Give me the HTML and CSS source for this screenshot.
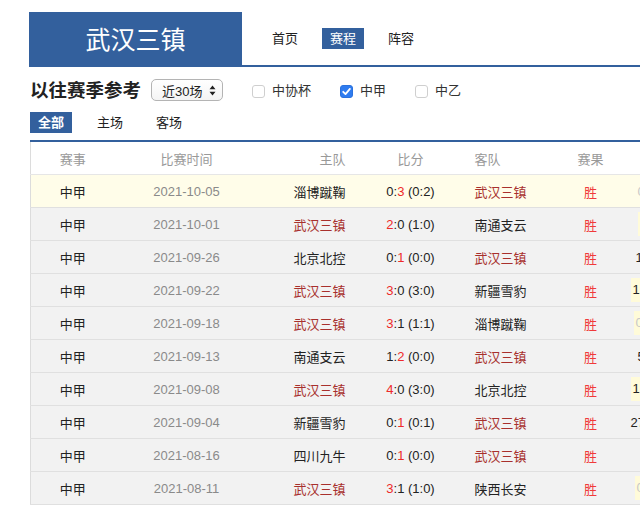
FILE: index.html
```html
<!DOCTYPE html>
<html lang="zh-CN">
<head>
    <meta charset="UTF-8">
    <meta name="viewport" content="width=device-width, initial-scale=1.0">
    <title>武汉三镇 - 赛程</title>
    <link rel="stylesheet" href="styles.css">
</head>
<body>
<div class="page">

    <div class="top-bar">
        <div class="team-title">武汉三镇</div>
        <ul class="nav">
            <li>首页</li>
            <li class="active">赛程</li>
            <li>阵容</li>
        </ul>
    </div>

    <div class="filter-row">
        <h2 class="section-title">以往赛季参考</h2>
        <div class="fake-select">
            <span>近30场</span>
            <svg width="7" height="11" viewBox="0 0 7 11"><path d="M3.5 0.5 L6.5 4.2 L0.5 4.2 Z M3.5 10.5 L6.5 6.8 L0.5 6.8 Z" fill="#222"/></svg>
        </div>
        <label class="check"><span class="box"></span>中协杯</label>
        <label class="check"><span class="box checked"><svg width="11" height="11" viewBox="0 0 11 11"><path d="M2.2 5.8 L4.5 8.1 L8.9 2.9" fill="none" stroke="#fff" stroke-width="1.8" stroke-linecap="round" stroke-linejoin="round"/></svg></span>中甲</label>
        <label class="check"><span class="box"></span>中乙</label>
    </div>

    <ul class="tabs">
        <li class="active">全部</li>
        <li>主场</li>
        <li>客场</li>
    </ul>

    <table class="matches">
        <colgroup>
            <col class="c-league">
            <col class="c-date">
            <col class="c-home">
            <col class="c-score">
            <col class="c-away">
            <col class="c-result">
            <col class="c-extra">
        </colgroup>
        <thead>
            <tr>
                <th>赛事</th>
                <th>比赛时间</th>
                <th class="home">主队</th>
                <th>比分</th>
                <th class="away">客队</th>
                <th class="result">赛果</th>
                <th class="extra"></th>
            </tr>
        </thead>
        <tbody>
            <tr class="current">
                <td>中甲</td><td class="date">2021-10-05</td>
                <td class="home">淄博蹴鞠</td>
                <td>0:<em>3</em> (0:2)</td>
                <td class="away me">武汉三镇</td>
                <td class="result">胜</td>
                <td class="extra far"><span class="dim">0.5</span></td>
            </tr>
            <tr>
                <td>中甲</td><td class="date">2021-10-01</td>
                <td class="home me">武汉三镇</td>
                <td><em>2</em>:0 (1:0)</td>
                <td class="away">南通支云</td>
                <td class="result">胜</td>
                <td class="extra far"><span class="hl blank">1.5</span></td>
            </tr>
            <tr>
                <td>中甲</td><td class="date">2021-09-26</td>
                <td class="home">北京北控</td>
                <td>0:<em>1</em> (0:0)</td>
                <td class="away me">武汉三镇</td>
                <td class="result">胜</td>
                <td class="extra mid">1.0</td>
            </tr>
            <tr>
                <td>中甲</td><td class="date">2021-09-22</td>
                <td class="home me">武汉三镇</td>
                <td><em>3</em>:0 (3:0)</td>
                <td class="away">新疆雪豹</td>
                <td class="result">胜</td>
                <td class="extra"><span class="hl">1.5</span></td>
            </tr>
            <tr>
                <td>中甲</td><td class="date">2021-09-18</td>
                <td class="home me">武汉三镇</td>
                <td><em>3</em>:1 (1:1)</td>
                <td class="away">淄博蹴鞠</td>
                <td class="result">胜</td>
                <td class="extra near"><span class="hl dim">0.5</span></td>
            </tr>
            <tr>
                <td>中甲</td><td class="date">2021-09-13</td>
                <td class="home">南通支云</td>
                <td>1:<em>2</em> (0:0)</td>
                <td class="away me">武汉三镇</td>
                <td class="result">胜</td>
                <td class="extra far">5</td>
            </tr>
            <tr>
                <td>中甲</td><td class="date">2021-09-08</td>
                <td class="home me">武汉三镇</td>
                <td><em>4</em>:0 (3:0)</td>
                <td class="away">北京北控</td>
                <td class="result">胜</td>
                <td class="extra"><span class="hl">1.5</span></td>
            </tr>
            <tr>
                <td>中甲</td><td class="date">2021-09-04</td>
                <td class="home">新疆雪豹</td>
                <td>0:<em>1</em> (0:1)</td>
                <td class="away me">武汉三镇</td>
                <td class="result">胜</td>
                <td class="extra">27</td>
            </tr>
            <tr>
                <td>中甲</td><td class="date">2021-08-16</td>
                <td class="home">四川九牛</td>
                <td>0:<em>1</em> (0:0)</td>
                <td class="away me">武汉三镇</td>
                <td class="result">胜</td>
                <td class="extra"></td>
            </tr>
            <tr>
                <td>中甲</td><td class="date">2021-08-11</td>
                <td class="home me">武汉三镇</td>
                <td><em>3</em>:1 (1:0)</td>
                <td class="away">陕西长安</td>
                <td class="result">胜</td>
                <td class="extra near2"><span class="hl dim">0.5</span></td>
            </tr>
        </tbody>
    </table>

</div>
</body>
</html>
```

FILE: styles.css
```css
html, body {
    margin: 0;
    padding: 0;
    overflow: hidden;
    background: #fff;
}

body {
    font-family: "Liberation Sans", "Noto Sans CJK SC", sans-serif;
    font-size: 13px;
    color: #222;
}

.page {
    width: 610px;
    padding-left: 30px;
    padding-top: 12px;
    overflow: hidden;
}

ul {
    list-style: none;
    margin: 0;
    padding: 0;
}

/* Top bar */
.top-bar {
    display: flex;
    align-items: center;
    margin-left: -1px;
    border-bottom: 2px solid #33609d;
}

.team-title {
    width: 213px;
    height: 53px;
    line-height: 53px;
    background: #33609d;
    color: #fff;
    text-align: center;
    font-size: 25px;
    font-family: "Noto Sans CJK SC", sans-serif;
}

.nav {
    display: flex;
    gap: 16px;
    padding-left: 22px;
}

.nav li {
    padding: 0 8px;
    height: 21px;
    line-height: 21px;
    font-size: 13px;
    color: #222;
}

.nav li.active {
    background: #33609d;
    color: #fff;
}

/* Filters */
.filter-row {
    display: flex;
    align-items: center;
    height: 22px;
    margin-top: 12px;
}

.section-title {
    margin: 0 10px 3px 0;
    font-size: 18.5px;
    font-weight: bold;
    color: #222;
    font-family: "Noto Sans CJK SC", sans-serif;
    line-height: 22px;
}

.fake-select {
    display: flex;
    align-items: center;
    justify-content: space-between;
    box-sizing: border-box;
    width: 72px;
    height: 22px;
    padding: 0 6px 0 10px;
    border: 1px solid #b4b4b4;
    border-radius: 5px;
    background: linear-gradient(#fff, #f4f4f4);
    font-size: 13px;
    margin-right: 29px;
}

.check {
    display: flex;
    align-items: center;
    margin: 0 29px 2px 0;
    font-size: 13px;
    color: #333;
}

.check .box {
    display: flex;
    align-items: center;
    justify-content: center;
    box-sizing: border-box;
    width: 13px;
    height: 13px;
    margin: 4px 7px 0 0;
    border: 1px solid #cfcfcf;
    border-radius: 3px;
    background: #fff;
}

.check .box.checked {
    background: #2f7cf0;
    border-color: #2a72de;
}

/* Tabs */
.tabs {
    display: flex;
    gap: 17px;
    margin-top: 11px;
}

.tabs li {
    padding: 0 8px;
    height: 21px;
    line-height: 21px;
    color: #222;
}

.tabs li.active {
    background: #33609d;
    color: #fff;
    font-weight: bold;
}

/* Match table */
.matches {
    margin-top: 7px;
    width: 676px;
    table-layout: fixed;
    border-collapse: collapse;
    border-top: 2px solid #33609d;
    border-left: 1px solid #dcdcdc;
}

.c-league { width: 84px; }
.c-date { width: 144px; }
.c-home { width: 97px; }
.c-score { width: 110px; }
.c-away { width: 89px; }
.c-result { width: 72px; }
.c-extra { width: 80px; }

.matches th,
.matches td {
    height: 32px;
    padding: 0;
    text-align: center;
    white-space: nowrap;
    border-bottom: 1px solid #e0e0e0;
}

.matches th {
    font-weight: normal;
    color: #999;
    background: #fff;
    border-bottom-color: #e6e6e6;
}

.matches tbody tr {
    background: #f2f2f2;
}

.matches tbody tr.current {
    background: #fffde9;
}

.matches .home {
    text-align: right;
    padding-right: 10px;
}

.matches .away {
    text-align: left;
    padding-left: 9px;
}

.matches .result {
    color: #f03a3a;
}

.matches th.result {
    color: #999;
}

.matches .date {
    color: #8a8a8a;
}

.matches .me {
    color: #a8302d;
}

.matches em {
    font-style: normal;
    color: #ee2a2a;
}

.matches .extra {
    text-align: left;
    padding-left: 4px;
}

.matches .extra.mid { padding-left: 9px; }
.matches .extra.near { padding-left: 7px; }
.matches .extra.near2 { padding-left: 8px; }
.matches .extra.far { padding-left: 11px; }

.hl {
    display: inline-block;
    padding: 0 6px 0 2px;
    height: 24px;
    line-height: 24px;
    background: #fffbd9;
}

.hl.blank {
    padding-left: 4px;
}

.dim {
    color: #c8c8c8;
}
```
